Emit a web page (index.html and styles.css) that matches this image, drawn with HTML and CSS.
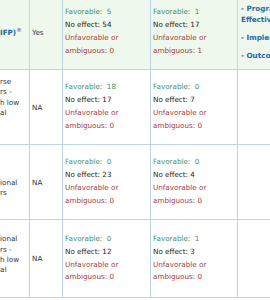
FILE: index.html
```html
<!DOCTYPE html>
<html lang="en">
<head>
<meta charset="utf-8">
<title>Outcomes table</title>
<link rel="stylesheet" href="styles.css">
</head>
<body>
<div class="viewport">
<table class="grid">
<colgroup>
<col class="c-name"><col class="c-flag"><col class="c-res"><col class="c-res2"><col class="c-links">
</colgroup>
<tbody>
<tr class="row row--first">
<td class="name"><span class="prog">IFP)<sup>®</sup></span></td>
<td class="flag">Yes</td>
<td class="res"><div class="fav">Favorable:&nbsp; 5</div><div class="none">No effect: 54</div><div class="unfav">Unfavorable or ambiguous:&nbsp;0</div></td>
<td class="res"><div class="fav">Favorable:&nbsp; 1</div><div class="none">No effect: 17</div><div class="unfav">Unfavorable or ambiguous:&nbsp;1</div></td>
<td class="links"><div class="link">- Program Effectiveness</div><div class="link">- Implementation</div><div class="link">- Outcomes</div></td>
</tr>
<tr class="row">
<td class="name name--low">rse<br>rs -<br>h low<br>al</td>
<td class="flag">NA</td>
<td class="res"><div class="fav">Favorable:&nbsp; 18</div><div class="none">No effect: 17</div><div class="unfav">Unfavorable or ambiguous:&nbsp;0</div></td>
<td class="res"><div class="fav">Favorable:&nbsp; 0</div><div class="none">No effect: 7</div><div class="unfav">Unfavorable or ambiguous:&nbsp;0</div></td>
<td class="links"></td>
</tr>
<tr class="row">
<td class="name name--high">ional<br>rs</td>
<td class="flag">NA</td>
<td class="res"><div class="fav">Favorable:&nbsp; 0</div><div class="none">No effect: 23</div><div class="unfav">Unfavorable or ambiguous:&nbsp;0</div></td>
<td class="res"><div class="fav">Favorable:&nbsp; 0</div><div class="none">No effect: 4</div><div class="unfav">Unfavorable or ambiguous:&nbsp;0</div></td>
<td class="links"></td>
</tr>
<tr class="row row--tall">
<td class="name name--mid">ional<br>rs -<br>h low<br>al</td>
<td class="flag">NA</td>
<td class="res"><div class="fav">Favorable:&nbsp; 0</div><div class="none">No effect: 12</div><div class="unfav">Unfavorable or ambiguous:&nbsp;0</div></td>
<td class="res"><div class="fav">Favorable:&nbsp; 1</div><div class="none">No effect: 3</div><div class="unfav">Unfavorable or ambiguous:&nbsp;0</div></td>
<td class="links"></td>
</tr>
</tbody>
</table>
</div>
</body>
</html>
```
FILE: styles.css
```css
html, body {
  margin: 0;
  padding: 0;
  background: #ffffff;
  overflow: hidden;
}

.viewport {
  margin-top: -5px;
  width: 360px;
}

.grid {
  border-collapse: separate;
  border-spacing: 0;
  table-layout: fixed;
  width: 330px;
  font-family: "DejaVu Sans", Verdana, sans-serif;
  font-size: 7.2px;
  color: #222222;
}

.c-name { width: 30px; }
.c-flag { width: 33px; }
.c-res { width: 88px; }
.c-res2 { width: 87px; }
.c-links { width: 92px; }

.grid td {
  box-sizing: border-box;
  border-right: 1px solid #bcd4e4;
  border-bottom: 1px solid #bcd4e4;
  padding: 0 2px;
  vertical-align: middle;
  height: 75px;
  text-align: left;
}

.grid td.name {
  padding: 0;
  line-height: 10.3px;
  color: #333333;
  white-space: nowrap;
}

.row--first td {
  background: #eff8ec;
}

.row--tall td {
  height: 78px;
}

.name--low { padding-bottom: 19px !important; }
.name--high { padding-top: 12px !important; }
.name--mid { padding-bottom: 7px !important; }

.prog {
  color: #23619f;
  font-weight: bold;
}

.prog sup {
  font-size: 5.5px;
  vertical-align: 3px;
  font-weight: normal;
}

.flag {
  color: #333333;
}

.res {
  line-height: 12.8px;
}

.fav { color: #3c9070; }
.none { color: #222222; }
.unfav { color: #ab3a3a; }

.links {
  padding-left: 3px !important;
  white-space: normal;
}

.link {
  color: #2668a8;
  font-weight: bold;
  line-height: 11px;
  margin-bottom: 7px;
}

.link:last-child {
  margin-bottom: 0;
}
```
